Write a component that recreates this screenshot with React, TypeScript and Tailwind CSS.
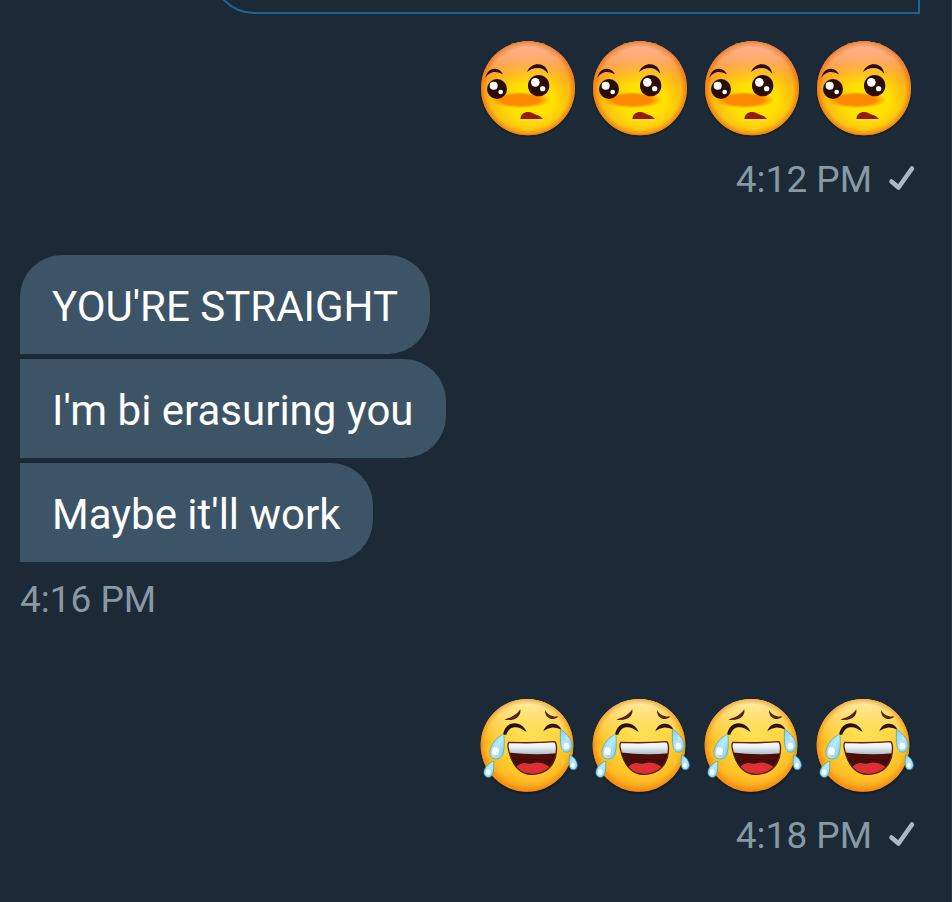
import { useId } from "react";
import type { ReactNode } from "react";

const PensiveFace = () => {
    const id = useId();
    return (
        <svg viewBox="0 0 336 336" className="size-28 shrink-0" role="img" aria-label="Embarrassed face">
            <defs>
                <radialGradient
                    id={`${id}base`}
                    gradientUnits="userSpaceOnUse"
                    cx="0"
                    cy="0"
                    r="1"
                    gradientTransform="translate(176 208) scale(190 160)"
                >
                    <stop offset="0" stopColor="#ffea00" />
                    <stop offset="0.35" stopColor="#ffe003" />
                    <stop offset="0.6" stopColor="#ffc011" />
                    <stop offset="0.85" stopColor="#fd9a22" />
                    <stop offset="1" stopColor="#f58430" />
                </radialGradient>
                <linearGradient id={`${id}top`} x1="0" y1="0" x2="0" y2="1">
                    <stop offset="0" stopColor="#ffb399" />
                    <stop offset="0.18" stopColor="#ffae7c" stopOpacity="0.85" />
                    <stop offset="0.45" stopColor="#ffb040" stopOpacity="0" />
                </linearGradient>
                <radialGradient id={`${id}rim`}>
                    <stop offset="0.87" stopColor="#e87510" stopOpacity="0" />
                    <stop offset="1" stopColor="#e36a12" stopOpacity="0.7" />
                </radialGradient>
                <radialGradient id={`${id}blush`}>
                    <stop offset="0.65" stopColor="#ff8a00" />
                    <stop offset="1" stopColor="#ff9a00" stopOpacity="0" />
                </radialGradient>
                <radialGradient id={`${id}shadow`}>
                    <stop offset="0.92" stopColor="#0b1118" stopOpacity="0.7" />
                    <stop offset="1" stopColor="#0b1118" stopOpacity="0" />
                </radialGradient>
            </defs>
            <circle cx="168" cy="173" r="146" fill={`url(#${id}shadow)`} />
            <circle cx="168" cy="169" r="141" fill={`url(#${id}base)`} />
            <circle cx="168" cy="169" r="141" fill={`url(#${id}top)`} />
            <circle cx="168" cy="169" r="141" fill={`url(#${id}rim)`} />
            <ellipse cx="146" cy="204" rx="91" ry="25" fill={`url(#${id}blush)`} />
            <g fill="#2a0c05">
                <path d="M40 137C44 121 54 110 67 110C79 110 88 116 93 127C81 121 73 119 64 120C54 122 47 128 40 137Z" />
                <path d="M165 120C172 104 186 96 200 97C216 98 226 109 229 125C218 113 209 108 199 108C187 107 176 111 165 120Z" />
                <circle cx="75" cy="171" r="30" />
                <circle cx="200" cy="161" r="32" />
            </g>
            <g fill="#fff">
                <circle cx="65" cy="161" r="12" />
                <circle cx="86" cy="180" r="7" />
                <circle cx="190" cy="151" r="13" />
                <circle cx="212" cy="170" r="8" />
            </g>
            <path d="M144 264H214" stroke="#ffdc62" strokeWidth="4" />
            <path d="M145 261C147 246 156 240 168 240C179 240 184 246 193 248C202 250 208 255 213 261Z" fill="#951b0a" />
        </svg>
    );
};

const JoyFace = () => {
    const id = useId();
    return (
        <svg viewBox="0 -6 336 336" className="size-28 shrink-0" role="img" aria-label="Face with tears of joy">
            <defs>
                <radialGradient id={`${id}base`} gradientUnits="userSpaceOnUse" cx="172" cy="142" r="174">
                    <stop offset="0" stopColor="#ffdf50" />
                    <stop offset="0.45" stopColor="#ffd43c" />
                    <stop offset="0.75" stopColor="#ffbc24" />
                    <stop offset="1" stopColor="#f58410" />
                </radialGradient>
                <linearGradient id={`${id}top`} x1="0" y1="0" x2="0" y2="1">
                    <stop offset="0" stopColor="#fff0b4" stopOpacity="0.95" />
                    <stop offset="0.45" stopColor="#ffe479" stopOpacity="0" />
                </linearGradient>
                <radialGradient id={`${id}rim`}>
                    <stop offset="0.88" stopColor="#f29112" stopOpacity="0" />
                    <stop offset="1" stopColor="#ed8410" stopOpacity="0.6" />
                </radialGradient>
                <radialGradient id={`${id}shadow`}>
                    <stop offset="0.92" stopColor="#0b1118" stopOpacity="0.7" />
                    <stop offset="1" stopColor="#0b1118" stopOpacity="0" />
                </radialGradient>
                <linearGradient id={`${id}teeth`} x1="0" y1="0" x2="0" y2="1">
                    <stop offset="0" stopColor="#ffffff" />
                    <stop offset="0.45" stopColor="#eef3f7" />
                    <stop offset="1" stopColor="#afbdc9" />
                </linearGradient>
                <linearGradient id={`${id}tear`} x1="0" y1="0" x2="1" y2="1">
                    <stop offset="0" stopColor="#83cbe5" />
                    <stop offset="0.5" stopColor="#b4ebf9" />
                    <stop offset="1" stopColor="#78cce8" />
                </linearGradient>
                <clipPath id={`${id}mouth`}>
                    <path d="M111 157Q180 160 248 155Q255 160 253 185C250 228 222 250 184 253C143 255 117 224 108 170Q107 160 111 157Z" />
                </clipPath>
            </defs>
            <circle cx="166" cy="172" r="144" fill={`url(#${id}shadow)`} />
            <circle cx="165" cy="166" r="139" fill={`url(#${id}base)`} />
            <circle cx="165" cy="166" r="139" fill={`url(#${id}top)`} />
            <circle cx="165" cy="166" r="139" fill={`url(#${id}rim)`} />
            <g fill="#5a2208">
                <path d="M145 58C148 78 132 94 97 89C114 83 131 78 145 58Z" />
                <path d="M219 59C225 73 239 81 259 79C249 94 217 88 219 59Z" />
            </g>
            <g fill="#2d0e05">
                <path d="M93 134C97 112 110 100 128 100C146 100 157 111 164 126C149 116 140 111 127 112C114 113 107 123 103 134Z" />
                <path d="M214 124C219 107 232 100 244 101C257 102 265 109 268 119C256 114 248 112 239 113C229 114 221 118 214 124Z" />
            </g>
            <g clipPath={`url(#${id}mouth)`}>
                <path d="M100 150H260V260H100Z" fill="#4d0d08" />
                <path d="M112 208H250V226H112Z" fill="#35100a" opacity="0.5" />
                <path d="M125 241Q142 216 160 219Q174 224 184 219Q210 212 235 233V260H125Z" fill="#dc3036" />
                <path d="M105 151H256V190Q180 197 105 187Z" fill={`url(#${id}teeth)`} />
            </g>
            <path
                d="M111 157Q180 160 248 155Q255 160 253 185C250 228 222 250 184 253C143 255 117 224 108 170Q107 160 111 157Z"
                fill="none"
                stroke="#542009"
                strokeWidth="4"
            />
            <g fill={`url(#${id}tear)`} stroke="#4a9bb0" strokeWidth="2">
                <path d="M95 132C98 150 98 176 93 191C89 203 81 208 71 207C57 206 51 193 55 178C60 158 77 140 95 132Z" />
                <path d="M266 118C281 127 294 142 299 158C304 174 298 184 286 186C275 187 268 180 267 168C265 150 264 134 266 118Z" />
                <path d="M65 213C66 228 66 244 61 254C54 266 39 264 36 250C34 235 49 219 65 213Z" />
                <path d="M293 194C305 200 314 210 316 224C316 236 308 241 299 238C289 234 291 213 293 194Z" />
            </g>
            <g fill="#fff">
                <ellipse cx="71" cy="184" rx="10" ry="12" />
                <ellipse cx="284" cy="168" rx="8" ry="10" />
                <ellipse cx="49" cy="246" rx="7" ry="8" />
                <ellipse cx="303" cy="226" rx="6" ry="7" />
            </g>
        </svg>
    );
};

const SentCheck = () => (
    <svg viewBox="0 0 32 32" className="size-8" fill="none" role="img" aria-label="Sent">
        <path
            d="M3.5 17.5L10.5 23.5L24 4.5"
            stroke="#aab8c2"
            strokeWidth="4.6"
            strokeLinecap="round"
            strokeLinejoin="round"
        />
    </svg>
);

const SentMessage = ({ time, children }: { time: string; children: ReactNode }) => (
    <section className="flex flex-col items-end gap-[13px] pr-[31px]">
        <div className="flex">{children}</div>
        <div className="flex items-center gap-4">
            <time className="text-[37px] leading-[45px] text-[#8899a6]">{time}</time>
            <SentCheck />
        </div>
    </section>
);

const received = ["YOU'RE STRAIGHT", "I'm bi erasuring you", "Maybe it'll work"];

const App = () => {
    return (
        <main className="min-h-screen border-r border-[#2b3741] bg-[#1c2936] font-[Roboto,sans-serif]">
            <div className="flex h-3.5 items-end justify-end overflow-hidden pr-[31px]">
                <div className="h-24 w-[77%] shrink-0 rounded-bl-[42px] border-2 border-[#1f6593]" />
            </div>

            <div className="flex flex-col pt-[18px] pb-11">
                <SentMessage time="4:12 PM">
                    {[0, 1, 2, 3].map((n) => (
                        <PensiveFace key={n} />
                    ))}
                </SentMessage>

                <section className="mt-[53px] flex flex-col items-start gap-[5px] pl-5">
                    {received.map((text) => (
                        <p
                            key={text}
                            className="rounded-r-[42px] bg-[#3d5466] px-8 pt-[27px] pb-[23px] text-[42px] leading-[49px] text-white first:rounded-tl-[42px]"
                        >
                            {text}
                        </p>
                    ))}
                    <time className="mt-2.5 text-[37px] leading-[45px] text-[#8899a6]">4:16 PM</time>
                </section>

                <div className="mt-[66px]">
                    <SentMessage time="4:18 PM">
                        {[0, 1, 2, 3].map((n) => (
                            <JoyFace key={n} />
                        ))}
                    </SentMessage>
                </div>
            </div>
        </main>
    );
};

export default App;
